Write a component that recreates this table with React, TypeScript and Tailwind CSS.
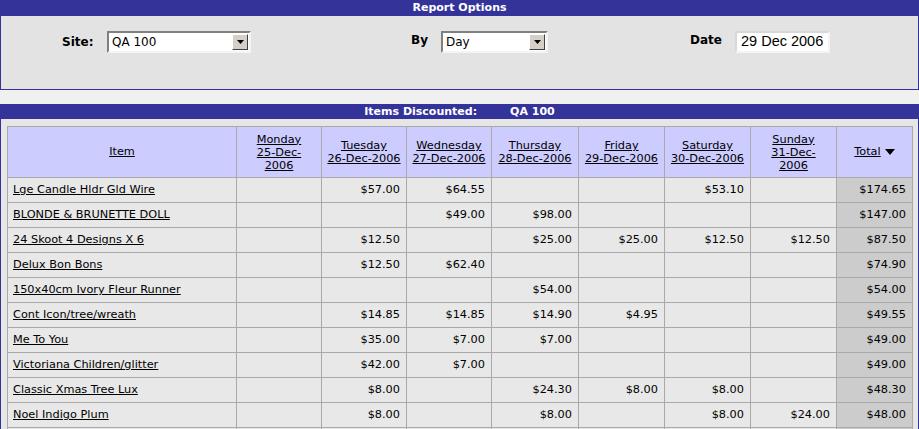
import React from 'react'

type Row = { item: string; days: string[]; total: string }

const rows: Row[] = [
  { item: 'Lge Candle Hldr Gld Wire', days: ['', '$57.00', '$64.55', '', '', '$53.10', ''], total: '$174.65' },
  { item: 'BLONDE & BRUNETTE DOLL', days: ['', '', '$49.00', '$98.00', '', '', ''], total: '$147.00' },
  { item: '24 Skoot 4 Designs X 6', days: ['', '$12.50', '', '$25.00', '$25.00', '$12.50', '$12.50'], total: '$87.50' },
  { item: 'Delux Bon Bons', days: ['', '$12.50', '$62.40', '', '', '', ''], total: '$74.90' },
  { item: '150x40cm Ivory Fleur Runner', days: ['', '', '', '$54.00', '', '', ''], total: '$54.00' },
  { item: 'Cont Icon/tree/wreath', days: ['', '$14.85', '$14.85', '$14.90', '$4.95', '', ''], total: '$49.55' },
  { item: 'Me To You', days: ['', '$35.00', '$7.00', '$7.00', '', '', ''], total: '$49.00' },
  { item: 'Victoriana Children/glitter', days: ['', '$42.00', '$7.00', '', '', '', ''], total: '$49.00' },
  { item: 'Classic Xmas Tree Lux', days: ['', '$8.00', '', '$24.30', '$8.00', '$8.00', ''], total: '$48.30' },
  { item: 'Noel Indigo Plum', days: ['', '$8.00', '', '$8.00', '', '$8.00', '$24.00'], total: '$48.00' },
  // next row is only just visible at the bottom edge
  { item: '', days: ['', '', '', '', '', '', ''], total: '' },
]

const dayHeads: { lines: string[]; w: string }[] = [
  { lines: ['Monday', '25-Dec-', '2006'], w: 'w-[85px]' },
  { lines: ['Tuesday', '26-Dec-2006'], w: 'w-[85px]' },
  { lines: ['Wednesday', '27-Dec-2006'], w: 'w-[85px]' },
  { lines: ['Thursday', '28-Dec-2006'], w: 'w-[87px]' },
  { lines: ['Friday', '29-Dec-2006'], w: 'w-[86px]' },
  { lines: ['Saturday', '30-Dec-2006'], w: 'w-[86px]' },
  { lines: ['Sunday', '31-Dec-', '2006'], w: 'w-[86px]' },
]

function Select({ value, width }: { value: string; width: string }) {
  return (
    <div className={`${width} h-[22px] flex items-center bg-white border-2 border-t-[#808080] border-l-[#808080] border-b-[#f4f4f4] border-r-[#f4f4f4]`}>
      <span className="flex-1 pl-[3px] text-[12px] text-black leading-none">{value}</span>
      <div className="w-[16px] h-[16px] mr-[1px] bg-[#d4d0c8] border border-t-white border-l-white border-b-[#404040] border-r-[#404040] flex items-center justify-center">
        <svg width="7" height="4" viewBox="0 0 7 4"><path d="M0 0h7L3.5 4z" fill="#000" /></svg>
      </div>
    </div>
  )
}

export default function App() {
  return (
    <div className="w-[919px] h-[429px] overflow-hidden bg-[#f0f0f0] font-['DejaVu_Sans',Verdana,sans-serif] text-[11.3px] text-black">
      {/* report options */}
      <div className="border border-t-0 border-[#333399] bg-[#e3e3e3] h-[90px]">
        <div className="bg-[#333399] h-[16px] text-white font-bold text-center leading-[16px] text-[11px]">Report Options</div>
        <div className="flex pt-[15px]">
          <div className="w-[410px] pl-[61px] flex items-start">
            <span className="w-[45px] text-[12px] font-bold mt-[2px]">Site:</span>
            <Select value="QA 100" width="w-[144px]" />
          </div>
          <div className="w-[279px] flex items-start">
            <span className="w-[30px] text-[12px] font-bold">By</span>
            <Select value="Day" width="w-[107px]" />
          </div>
          <div className="flex items-start">
            <span className="w-[45px] text-[12px] font-bold">Date</span>
            <div className="w-[95px] h-[22px] bg-white border-2 border-t-[#d8d8d8] border-l-[#d8d8d8] border-b-[#f4f4f4] border-r-[#f4f4f4] flex items-center pl-[4px] font-['Liberation_Sans',Arial,sans-serif] text-[14.5px]">
              29 Dec 2006
            </div>
          </div>
        </div>
      </div>

      <div className="h-[14px]" />

      {/* items discounted */}
      <div className="border-x border-[#333399] bg-[#e6e6e6]">
        <div className="bg-[#333399] h-[15px] text-white font-bold flex justify-center gap-[33px] leading-[15px] text-[11px]">
          <span>Items Discounted:</span>
          <span>QA 100</span>
        </div>
        <div className="pt-[7px] pl-[6px] pr-[5px]">
          <table className="border-collapse border border-[#f8f8f8] table-fixed w-[905px]">
            <thead>
              <tr className="h-[51px] bg-[#ccccff]">
                <th className="w-[229px] border border-[#a9a9a9] font-normal text-center align-middle">
                  <a className="underline">Item</a>
                </th>
                {dayHeads.map(d => (
                  <th key={d.lines[0]} className={`${d.w} border border-[#a9a9a9] font-normal text-center align-middle leading-[13px] px-0`}>
                    <a className="underline">
                      {d.lines.map((l, i) => (
                        <span key={i} className="block">{l}</span>
                      ))}
                    </a>
                  </th>
                ))}
                <th className="w-[76px] border border-[#a9a9a9] font-normal text-center align-middle">
                  <a className="underline">Total</a>
                  <svg className="inline-block ml-[4px] align-middle" width="10" height="6" viewBox="0 0 10 6"><path d="M0 0h10L5 6z" fill="#000" /></svg>
                </th>
              </tr>
            </thead>
            <tbody>
              {rows.map((r, idx) => (
                <tr key={idx} className="h-[25px] bg-[#e8e8e8]">
                  <td className="border border-[#a9a9a9] pl-[5px] pt-[1px]">
                    <a className="underline">{r.item}</a>
                  </td>
                  {r.days.map((v, i) => (
                    <td key={i} className="border border-[#a9a9a9] text-right pr-[6px] pt-[1px]">{v}</td>
                  ))}
                  <td className="border border-[#a9a9a9] text-right pr-[6px] pt-[1px] bg-[#cccccc]">{r.total}</td>
                </tr>
              ))}
            </tbody>
          </table>
        </div>
      </div>
    </div>
  )
}
